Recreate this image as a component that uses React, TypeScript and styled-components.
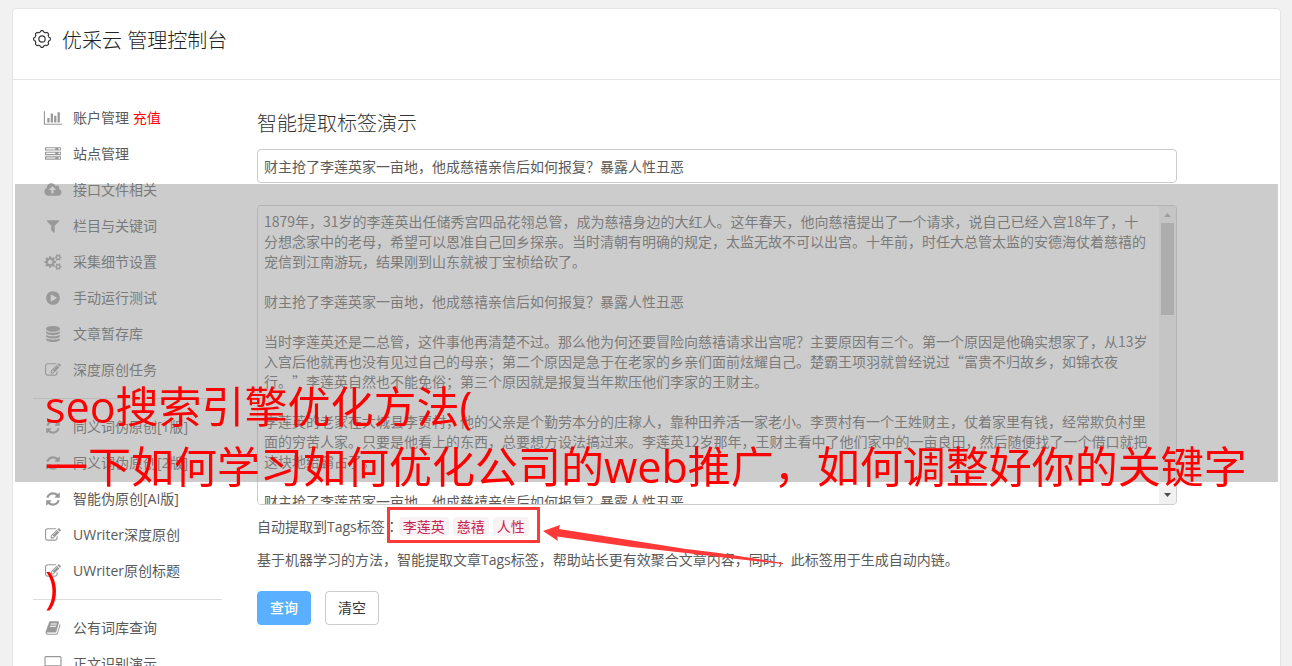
import React from "react";
import styled, { createGlobalStyle } from "styled-components";

const cjk = `"Noto Sans CJK SC", sans-serif`;
const ui = `"Open Sans", ${cjk}`;

const GlobalStyle = createGlobalStyle`
  *, *::before, *::after { box-sizing: border-box; }
  body {
    margin: 0;
    background: #f1f1f1;
    color: #5a5a5a;
    font: 14px/20px ${ui};
    text-spacing-trim: space-all;
  }
`;

const Page = styled.div`
  position: relative;
  height: 100vh;
  padding: 8px 11px 0 12px;
  overflow: hidden;
`;

const Panel = styled.div`
  min-height: 100%;
  background: #fff;
  border: 1px solid #e4e4e4;
  border-radius: 4px;
`;

const Header = styled.header`
  display: flex;
  align-items: center;
  gap: 11px;
  height: 71px;
  padding: 0 20px 11px;
  border-bottom: 1px solid #e4e4e4;
`;

const HeaderTitle = styled.h1`
  margin: 0;
  padding-top: 4px;
  color: #222;
  font-size: 20px;
  font-weight: 300;
  line-height: 28px;
`;

const Columns = styled.div`
  display: flex;
  gap: 35px;
  padding: 20px 103px 0 20px;
`;

const Sidebar = styled.nav`
  flex: 0 0 189px;
`;

const MenuList = styled.ul`
  margin: 0;
  padding: 0;
  list-style: none;

  & + & {
    margin-top: 10px;
    padding-top: 10px;
    border-top: 1px solid #ddd;
  }
`;

const MenuLink = styled.a`
  display: flex;
  align-items: center;
  gap: 10px;
  height: 36px;
  padding-left: 10px;
  color: #5a5a5a;
  text-decoration: none;
  white-space: nowrap;
`;

const MenuIcon = styled.svg`
  flex: none;
  width: 20px;
  height: 16px;
  fill: #999;
`;

const Accent = styled.span`
  color: #f00;
`;

const Main = styled.main`
  flex: 1;
  min-width: 0;
  padding-top: 9px;
`;

const Title = styled.h2`
  margin: 0 0 10px;
  color: #333;
  font-size: 20px;
  font-weight: 300;
  line-height: 30px;
`;

const TitleField = styled.input`
  display: block;
  width: 100%;
  height: 34px;
  padding: 6px;
  border: 1px solid #ccc;
  border-radius: 4px;
  background: #fff;
  color: #5a5a5a;
  font: 14px/20px ${cjk};
  outline: none;
`;

const ArticleBox = styled.div`
  display: flex;
  height: 300px;
  margin-top: 22px;
  border: 1px solid #ccc;
  border-radius: 4px;
  overflow: hidden;
`;

const ArticleField = styled.textarea`
  flex: 1;
  min-width: 0;
  padding: 5px 9px 5px 6px;
  border: 0;
  background: #fff;
  color: #5a5a5a;
  font: 14px/20px ${cjk};
  outline: none;
  resize: none;
  scrollbar-width: none;
`;

const ScrollTrack = styled.div`
  display: flex;
  flex-direction: column;
  width: 17px;
  padding: 0 2px;
  background: #f1f1f1;
`;

const ScrollArrow = styled.svg`
  flex: none;
  width: 13px;
  height: 17px;
`;

const ScrollThumb = styled.div`
  height: 92px;
  margin-bottom: auto;
  background: #c1c1c1;
`;

const TagLine = styled.div`
  display: flex;
  align-items: center;
  height: 20px;
  margin-top: 11px;
`;

const Colon = styled.span`
  font-family: "Noto Sans CJK TC", sans-serif;
`;

const TagGroup = styled.div`
  position: relative;
  display: flex;
  gap: 4px;
`;

const Tag = styled.code`
  height: 19px;
  padding: 0 4px;
  border-radius: 4px;
  background: #f9f2f4;
  color: #c7254e;
  font: 14px/19px ${cjk};
`;

const Highlight = styled.div`
  position: absolute;
  inset: -10px -11px -7px -12px;
  border: 3px solid #ff3838;
`;

const Arrow = styled.svg`
  position: absolute;
  top: 6px;
  left: 144px;
  width: 244px;
  height: 42px;
  fill: #ff3838;
`;

const Hint = styled.p`
  margin: 14px 0 21px;
`;

const Actions = styled.div`
  display: flex;
  gap: 14px;
`;

const Button = styled.button<{ $primary?: boolean }>`
  width: 54px;
  height: 34px;
  padding: 0;
  border: 1px solid ${(p) => (p.$primary ? "#5aafff" : "#ccc")};
  border-radius: 4px;
  background: ${(p) => (p.$primary ? "#5aafff" : "#fff")};
  color: ${(p) => (p.$primary ? "#fff" : "#333")};
  font: ${(p) => (p.$primary ? 500 : 400)} 14px/20px ${ui};
`;

const Banner = styled.div`
  position: absolute;
  top: 184px;
  left: 15px;
  right: 14px;
  height: 298px;
  padding: 193px 0 0 30px;
  background: rgba(153, 153, 153, 0.5);
  color: #f00;
  font-size: 43px;
  line-height: 60px;
  white-space: pre;
  pointer-events: none;
`;

type Glyph = { w: number; d: string };

const glyphs: Record<string, Glyph> = {
  chart: { w: 2048, d: "M640 896v512h-256v-512h256zM1024 384v1024h-256v-1024h256zM2048 1536v128h-2048v-1536h128v1408h1920zM1408 640v768h-256v-768h256zM1792 256v1152h-256v-1152h256z" },
  server: { w: 1792, d: "M128 1408h1024v-128h-1024v128zm0-512h1024v-128h-1024v128zm1568 448q0-40-28-68t-68-28-68 28-28 68 28 68 68 28 68-28 28-68zm-1568-960h1024v-128h-1024v128zm1568 448q0-40-28-68t-68-28-68 28-28 68 28 68 68 28 68-28 28-68zm0-512q0-40-28-68t-68-28-68 28-28 68 28 68 68 28 68-28 28-68zm96 832v384h-1792v-384h1792zm0-512v384h-1792v-384h1792zm0-512v384h-1792v-384h1792z" },
  upload: { w: 1920, d: "M1280 864q0-14-9-23l-352-352q-9-9-23-9t-23 9l-351 351q-10 12-10 24 0 14 9 23t23 9h224v352q0 13 9.500 22.500t22.500 9.500h192q13 0 22.500-9.500t9.500-22.500v-352h224q13 0 22.500-9.500t9.500-22.500zm640 288q0 159-112.500 271.500t-271.500 112.500h-1088q-185 0-316.500-131.500t-131.500-316.500q0-130 70-240t188-165q-2-30-2-43 0-212 150-362t362-150q156 0 285.500 87t188.500 231q71-62 166-62 106 0 181 75t75 181q0 76-41 138 130 31 213.500 135.500t83.500 238.500z" },
  filter: { w: 1792, d: "M1595 295q17 41-14 70l-493 493v742q0 42-39 59-13 5-25 5-27 0-45-19l-256-256q-19-19-19-45v-486l-493-493q-31-29-14-70 17-39 59-39h1280q42 0 59 39z" },
  cogs: { w: 1920, d: "M896 896q0-106-75-181t-181-75-181 75-75 181 75 181 181 75 181-75 75-181zm768 512q0-52-38-90t-90-38-90 38-38 90q0 53 37.500 90.500t90.500 37.500 90.500-37.500 37.500-90.500zm0-1024q0-52-38-90t-90-38-90 38-38 90q0 53 37.500 90.500t90.500 37.500 90.500-37.500 37.500-90.500zm-384 421v185q0 10-7 19.500t-16 10.500l-155 24q-11 35-32 76 34 48 90 115 7 11 7 20 0 12-7 19-23 30-82.500 89.500t-78.500 59.500q-11 0-21-7l-115-90q-37 19-77 31-11 108-23 155-7 24-30 24h-186q-11 0-20-7.500t-10-17.500l-23-153q-34-10-75-31l-118 89q-7 7-20 7-11 0-21-8-144-133-144-160 0-9 7-19 10-14 41-53t47-61q-23-44-35-82l-152-24q-10-1-17-9.500t-7-19.500v-185q0-10 7-19.500t16-10.500l155-24q11-35 32-76-34-48-90-115-7-11-7-20 0-12 7-20 22-30 82-89t79-59q11 0 21 7l115 90q34-18 77-32 11-108 23-154 7-24 30-24h186q11 0 20 7.500t10 17.500l23 153q34 10 75 31l118-89q8-7 20-7 11 0 21 8 144 133 144 160 0 8-7 19-12 16-42 54t-45 60q23 48 34 82l152 23q10 2 17 10.500t7 19.500zm640 533v140q0 16-149 31-12 27-30 52 51 113 51 138 0 4-4 7-122 71-124 71-8 0-46-47t-52-68q-20 2-30 2t-30-2q-14 21-52 68t-46 47q-2 0-124-71-4-3-4-7 0-25 51-138-18-25-30-52-149-15-149-31v-140q0-16 149-31 13-29 30-52-51-113-51-138 0-4 4-7 4-2 35-20t59-34 30-16q8 0 46 46.500t52 67.500q20-2 30-2t30 2q51-71 92-112l6-2q4 0 124 70 4 3 4 7 0 25-51 138 17 23 30 52 149 15 149 31zm0-1024v140q0 16-149 31-12 27-30 52 51 113 51 138 0 4-4 7-122 71-124 71-8 0-46-47t-52-68q-20 2-30 2t-30-2q-14 21-52 68t-46 47q-2 0-124-71-4-3-4-7 0-25 51-138-18-25-30-52-149-15-149-31v-140q0-16 149-31 13-29 30-52-51-113-51-138 0-4 4-7 4-2 35-20t59-34 30-16q8 0 46 46.500t52 67.500q20-2 30-2t30 2q51-71 92-112l6-2q4 0 124 70 4 3 4 7 0 25-51 138 17 23 30 52 149 15 149 31z" },
  play: { w: 1792, d: "M896 128q209 0 385.500 103t279.500 279.500 103 385.500-103 385.500-279.500 279.500-385.500 103-385.500-103-279.500-279.500-103-385.500 103-385.500 279.500-279.500 385.500-103zm384 823q32-18 32-55t-32-55l-544-320q-31-19-64-1-32 19-32 56v640q0 37 32 56 16 8 32 8 17 0 32-9z" },
  database: { w: 1792, d: "M896 768q237 0 443-43t325-127v170q0 69-103 128t-280 93.500-385 34.500-385-34.500-280-93.500-103-128v-170q119 84 325 127t443 43zm0 768q237 0 443-43t325-127v170q0 69-103 128t-280 93.500-385 34.500-385-34.500-280-93.500-103-128v-170q119 84 325 127t443 43zm0-384q237 0 443-43t325-127v170q0 69-103 128t-280 93.500-385 34.500-385-34.500-280-93.500-103-128v-170q119 84 325 127t443 43zm0-1152q208 0 385 34.500t280 93.500 103 128v128q0 69-103 128t-280 93.500-385 34.500-385-34.500-280-93.500-103-128v-128q0-69 103-128t280-93.500 385-34.500z" },
  edit: { w: 1792, d: "M888 1184l116-116-152-152-116 116v56h96v96h56zm440-720q-16-16-33 1l-350 350q-17 17-1 33t33-1l350-350q17-17 1-33zm80 594v190q0 119-84.500 203.500t-203.500 84.500h-832q-119 0-203.500-84.500t-84.500-203.500v-832q0-119 84.500-203.500t203.500-84.500h832q63 0 117 25 15 7 18 23 3 17-9 29l-49 49q-14 14-32 8-23-6-45-6h-832q-66 0-113 47t-47 113v832q0 66 47 113t113 47h832q66 0 113-47t47-113v-126q0-13 9-22l64-64q15-15 35-7t20 29zm-96-738l288 288-672 672h-288v-288zm444 132l-92 92-288-288 92-92q28-28 68-28t68 28l152 152q28 28 28 68t-28 68z" },
  refresh: { w: 1792, d: "M1639 1056q0 5-1 7-64 268-268 434.500t-478 166.500q-146 0-282.500-55t-243.500-157l-129 129q-19 19-45 19t-45-19-19-45v-448q0-26 19-45t45-19h448q26 0 45 19t19 45-19 45l-137 137q71 66 161 102t187 36q134 0 250-65t186-179q11-17 53-117 8-23 30-23h192q13 0 22.500 9.500t9.500 22.500zm25-800v448q0 26-19 45t-45 19h-448q-26 0-45-19t-19-45 19-45l138-138q-148-137-349-137-134 0-250 65t-186 179q-11 17-53 117-8 23-30 23h-199q-13 0-22.500-9.500t-9.500-22.500v-7q65-268 270-434.500t480-166.500q146 0 284 55.500t245 156.500l130-129q19-19 45-19t45 19 19 45z" },
  book: { w: 1792, d: "M1703 478q40 57 18 129l-275 906q-19 64-76.500 107.500t-122.500 43.500h-923q-77 0-148.500-53.500t-99.500-131.500q-24-67-2-127 0-4 3-27t4-37q1-8-3-21.500t-3-19.500q2-11 8-21t16.500-23.500 16.500-23.500q23-38 45-91.500t30-91.500q3-10 .5-30t-.5-28q3-11 17-28t17-23q21-36 42-92t25-90q1-9-2.500-32t.5-28q4-13 22-30.500t22-22.500q19-26 42.500-84.500t27.500-96.500q1-8-3-25.500t-2-26.500q2-8 9-18t18-23 17-21q8-12 16.500-30.500t15-35 16-36 19.500-32 26.500-23.500 36-11.500 47.500 5.500l-1 3q38-9 51-9h761q74 0 114 56t18 130l-274 906q-36 119-71.500 153.500t-128.500 34.500h-869q-27 0-38 15-11 16-1 43 24 70 144 70h923q29 0 56-15.500t35-41.500l300-987q7-22 5-57 38 15 59 43zm-1064 2q-4 13 2 22.500t20 9.500h608q13 0 25.500-9.500t16.500-22.500l21-64q4-13-2-22.500t-20-9.500h-608q-13 0-25.500 9.500t-16.500 22.500zm-83 256q-4 13 2 22.500t20 9.500h608q13 0 25.500-9.500t16.500-22.500l21-64q4-13-2-22.500t-20-9.500h-608q-13 0-25.500 9.500t-16.500 22.500z" },
  desktop: { w: 1920, d: "M1792 992v-832q0-13-9.500-22.500t-22.500-9.500h-1600q-13 0-22.500 9.500t-9.500 22.500v832q0 13 9.500 22.500t22.500 9.500h1600q13 0 22.500-9.500t9.500-22.500zm128-832v1088q0 66-47 113t-113 47h-544q0 37 16 77.500t32 71 16 43.500q0 26-19 45t-45 19h-512q-26 0-45-19t-19-45q0-14 16-44t32-70 16-78h-544q-66 0-113-47t-47-113v-1088q0-66 47-113t113-47h1600q66 0 113 47t47 113z" },
};

type MenuEntry = { icon: string; label: string; extra?: string };

const menu: MenuEntry[][] = [
  [
    { icon: "chart", label: "账户管理", extra: "充值" },
    { icon: "server", label: "站点管理" },
    { icon: "upload", label: "接口文件相关" },
    { icon: "filter", label: "栏目与关键词" },
    { icon: "cogs", label: "采集细节设置" },
    { icon: "play", label: "手动运行测试" },
    { icon: "database", label: "文章暂存库" },
    { icon: "edit", label: "深度原创任务" },
  ],
  [
    { icon: "refresh", label: "同义词伪原创[1版]" },
    { icon: "refresh", label: "同义词伪原创[2版]" },
    { icon: "refresh", label: "智能伪原创[AI版]" },
    { icon: "edit", label: "UWriter深度原创" },
    { icon: "edit", label: "UWriter原创标题" },
  ],
  [
    { icon: "book", label: "公有词库查询" },
    { icon: "desktop", label: "正文识别演示" },
  ],
];

const headline = "财主抢了李莲英家一亩地，他成慈禧亲信后如何报复？暴露人性丑恶";

const article = [
  "1879年，31岁的李莲英出任储秀宫四品花翎总管，成为慈禧身边的大红人。这年春天，他向慈禧提出了一个请求，说自己已经入宫18年了，十分想念家中的老母，希望可以恩准自己回乡探亲。当时清朝有明确的规定，太监无故不可以出宫。十年前，时任大总管太监的安德海仗着慈禧的宠信到江南游玩，结果刚到山东就被丁宝桢给砍了。",
  headline,
  "当时李莲英还是二总管，这件事他再清楚不过。那么他为何还要冒险向慈禧请求出宫呢？主要原因有三个。第一个原因是他确实想家了，从13岁入宫后他就再也没有见过自己的母亲；第二个原因是急于在老家的乡亲们面前炫耀自己。楚霸王项羽就曾经说过“富贵不归故乡，如锦衣夜行。”李莲英自然也不能免俗；第三个原因就是报复当年欺压他们李家的王财主。",
  "李莲英的老家在大城县李贾村，他的父亲是个勤劳本分的庄稼人，靠种田养活一家老小。李贾村有一个王姓财主，仗着家里有钱，经常欺负村里面的穷苦人家。只要是他看上的东西，总要想方设法搞过来。李莲英12岁那年，王财主看中了他们家中的一亩良田，然后随便找了一个借口就把这块地给霸占了。",
  headline,
].join("\n\n");

// Outline of a round gear with eight soft teeth, centred on 9,9.
const gearOutline =
  Array.from({ length: 160 }, (_, i) => {
    const angle = (i / 160) * Math.PI * 2;
    const wave = Math.cos(angle * 8);
    const radius = 7.7 + 0.7 * Math.tanh(wave * 1.8);
    const x = 9 + radius * Math.cos(angle);
    const y = 9 + radius * Math.sin(angle);
    return `${i ? "L" : "M"}${x.toFixed(2)} ${y.toFixed(2)}`;
  }).join("") + "Z";

const Gear = () => (
  <svg width="18" height="18" viewBox="0 0 18 18" fill="none" stroke="#333" strokeWidth="1.2" aria-hidden="true">
    <path d={gearOutline} />
    <circle cx="9" cy="9" r="3.2" />
  </svg>
);

export default function App() {
  return (
    <>
      <GlobalStyle />
      <Page lang="zh-CN">
        <Panel>
          <Header>
            <Gear />
            <HeaderTitle>优采云 管理控制台</HeaderTitle>
          </Header>
          <Columns>
            <Sidebar>
              {menu.map((group, g) => (
                <MenuList key={g}>
                  {group.map(({ icon, label, extra }) => (
                    <li key={label}>
                      <MenuLink href="#">
                        <MenuIcon viewBox={`0 0 ${glyphs[icon].w} 1792`} aria-hidden="true">
                          <path d={glyphs[icon].d} />
                        </MenuIcon>
                        <span>
                          {label}
                          {extra && <Accent> {extra}</Accent>}
                        </span>
                      </MenuLink>
                    </li>
                  ))}
                </MenuList>
              ))}
            </Sidebar>
            <Main>
              <Title>智能提取标签演示</Title>
              <TitleField aria-label="文章标题" defaultValue={headline} />
              <ArticleBox>
                <ArticleField aria-label="文章内容" defaultValue={article} />
                <ScrollTrack aria-hidden="true">
                  <ScrollArrow viewBox="0 0 13 17" fill="#a3a3a3">
                    <path d="M3 11 6.500 7 10 11z" />
                  </ScrollArrow>
                  <ScrollThumb />
                  <ScrollArrow viewBox="0 0 13 17" fill="#505050">
                    <path d="M3 6 6.500 10 10 6z" />
                  </ScrollArrow>
                </ScrollTrack>
              </ArticleBox>
              <TagLine>
                <span>自动提取到Tags标签<Colon lang="zh-TW">：</Colon></span>
                <TagGroup>
                  <Tag>李莲英</Tag>
                  <Tag>慈禧</Tag>
                  <Tag>人性</Tag>
                  <Highlight />
                  <Arrow viewBox="0 0 244 42" aria-hidden="true">
                    <path d="M0 8 17 2 16 6 143 26 176 30 240 40 240 41 176 34 143 30 89 24 14 13.500 15 18z" />
                  </Arrow>
                </TagGroup>
              </TagLine>
              <Hint>基于机器学习的方法，智能提取文章Tags标签，帮助站长更有效聚合文章内容，同时，此标签用于生成自动内链。</Hint>
              <Actions>
                <Button type="button" $primary>查询</Button>
                <Button type="button">清空</Button>
              </Actions>
            </Main>
          </Columns>
        </Panel>
        <Banner>{"seo搜索引擎优化方法(\n一下如何学习如何优化公司的web推广，如何调整好你的关键字\n\n)"}</Banner>
      </Page>
    </>
  );
}
